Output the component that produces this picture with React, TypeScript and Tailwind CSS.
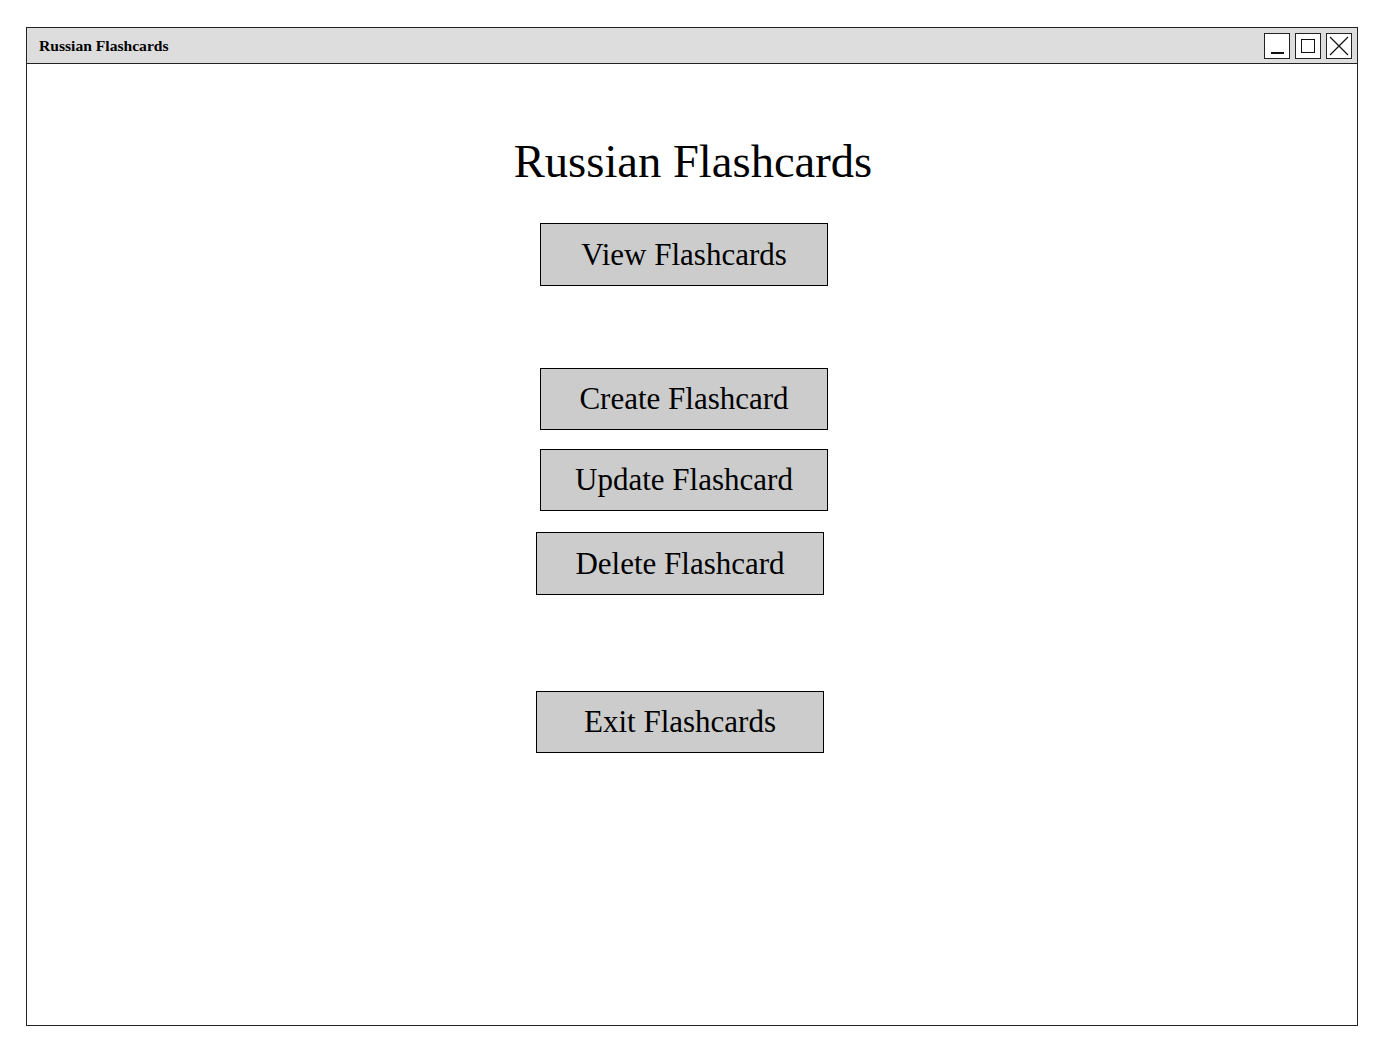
import React from "react";

const serif = { fontFamily: '"Liberation Serif", "Times New Roman", serif' };

function Btn({ label, className }: { label: string; className: string }) {
  return (
    <div
      className={`flex items-center justify-center w-[288px] border border-black bg-[#cccccc] text-[31px] text-black leading-none ${className}`}
    >
      {label}
    </div>
  );
}

export default function App() {
  return (
    <div className="w-[1386px] h-[1053px] bg-white pl-[26px] pt-[27px]" style={serif}>
      <div className="w-[1332px] h-[999px] border border-[#222] flex flex-col">
        <div className="h-[36px] bg-[#dddddd] border-b border-[#222] flex items-center justify-between pl-[12px] pr-[5px]">
          <span className="text-[15.6px] font-bold text-black">Russian Flashcards</span>
          <div className="flex gap-[5px]">
            <div className="w-[26px] h-[26px] border border-[#222] bg-white flex items-end justify-center pb-[4px]">
              <div className="w-[13px] h-[2px] bg-[#111]" />
            </div>
            <div className="w-[26px] h-[26px] border border-[#222] bg-white flex items-center justify-center">
              <div className="w-[14px] h-[14px] border-[1.5px] border-[#111]" />
            </div>
            <div className="w-[26px] h-[26px] border border-[#222] bg-white flex items-center justify-center">
              <svg width="20" height="20" viewBox="0 0 20 20">
                <path d="M1 1 L19 19 M19 1 L1 19" stroke="#111" strokeWidth="1.2" fill="none" />
              </svg>
            </div>
          </div>
        </div>
        <div className="flex flex-col items-start">
          <h1 className="self-center mt-[74px] text-[46.6px] leading-none text-black font-normal pl-[2px]">
            Russian Flashcards
          </h1>
          <Btn label="View Flashcards" className="ml-[513px] mt-[38px] h-[63px]" />
          <Btn label="Create Flashcard" className="ml-[513px] mt-[82px] h-[62px]" />
          <Btn label="Update Flashcard" className="ml-[513px] mt-[19px] h-[62px]" />
          <Btn label="Delete Flashcard" className="ml-[509px] mt-[21px] h-[63px]" />
          <Btn label="Exit Flashcards" className="ml-[509px] mt-[96px] h-[62px]" />
        </div>
      </div>
    </div>
  );
}
